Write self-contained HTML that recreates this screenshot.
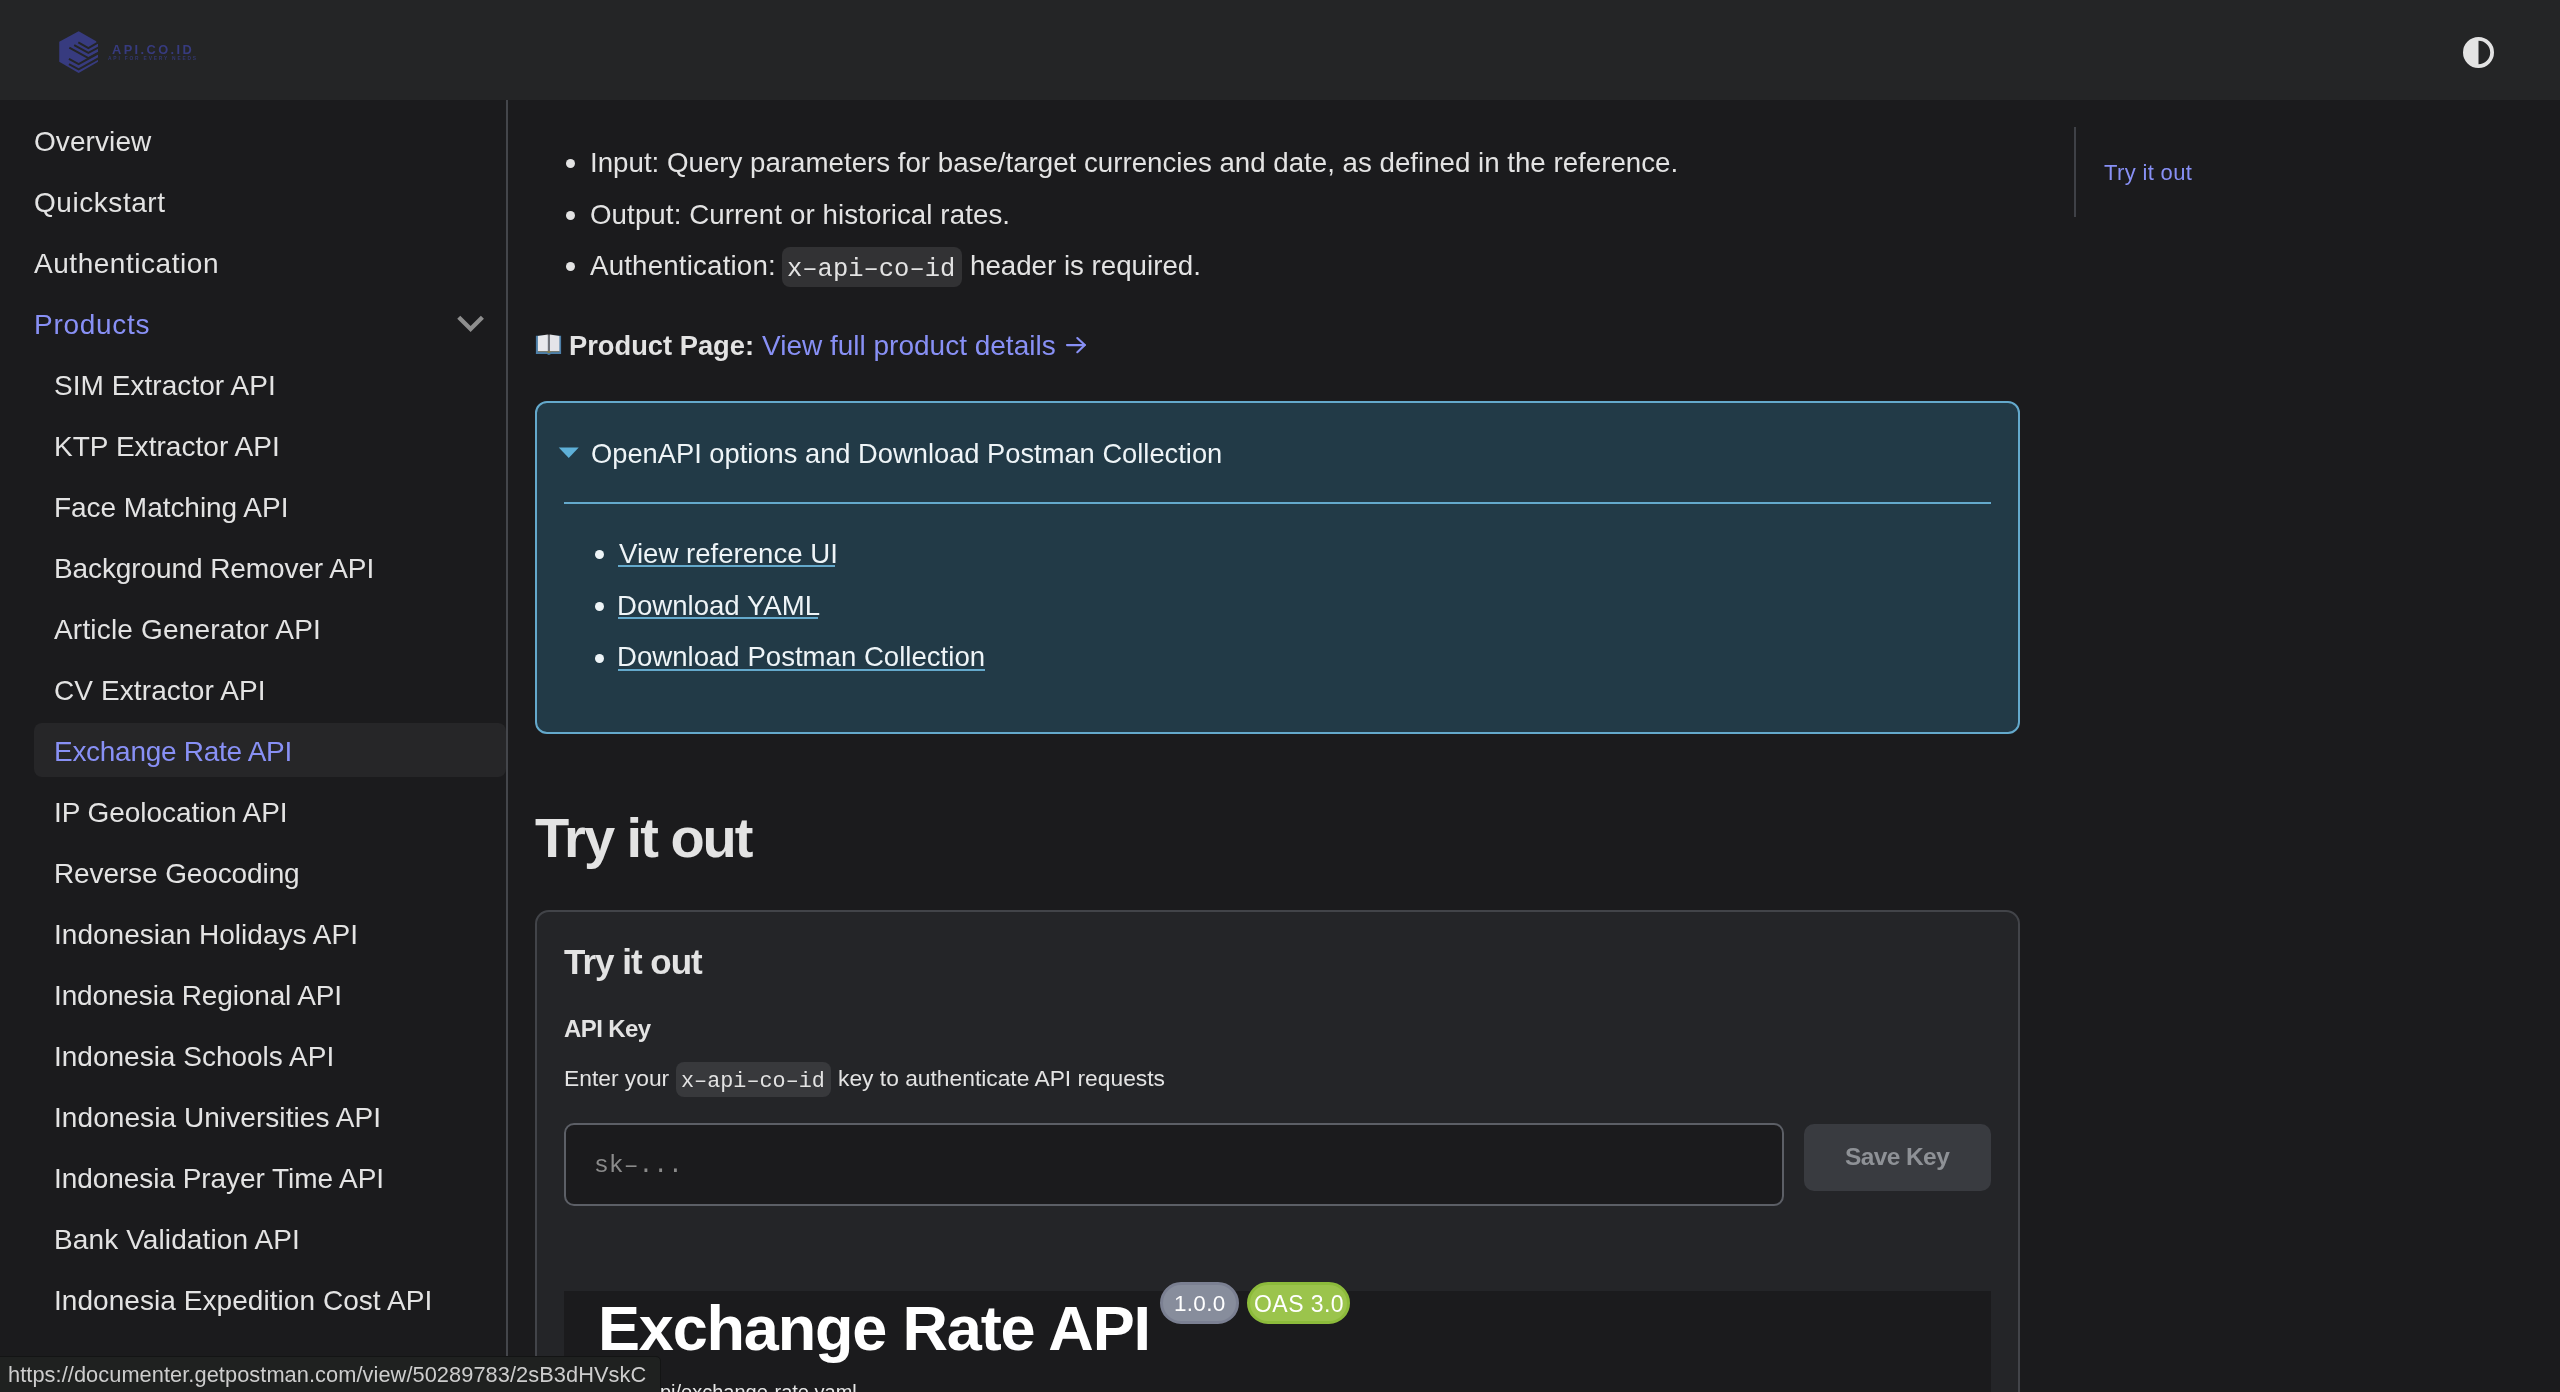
<!DOCTYPE html>
<html><head><meta charset="utf-8">
<style>
html,body{margin:0;padding:0;}
body{width:2560px;height:1392px;overflow:hidden;position:relative;background:#1b1b1d;font-family:"Liberation Sans",sans-serif;color:#e3e3e3;}
.t{position:absolute;white-space:nowrap;line-height:1;will-change:transform;}
.hdr{position:absolute;left:0;top:0;width:2560px;height:100px;background:#242526;}
.sb{position:absolute;left:0;top:100px;width:506px;height:1292px;border-right:2px solid #44464b;}
.si{font-size:28px;color:#e3e3e3;}
.sub{left:54px;}
.top{left:34px;}
.act{position:absolute;left:34px;top:723px;width:472px;height:54px;background:#262628;border-radius:8px;}
.pur{color:#8890f5;}
.mono{font-family:"Liberation Mono",monospace;}

.bul{position:absolute;width:9px;height:9px;border-radius:50%;background:#e3e3e3;}
.mt{font-size:27.7px;color:#e3e3e3;}
.code{position:absolute;background:#323234;border-radius:8px;}
.det{position:absolute;left:535px;top:401px;width:1481px;height:329px;border:2px solid #64a9cc;border-radius:12px;background:#223a47;}
.dl{font-size:27.6px;color:#eef4f7;}
.ul{position:absolute;height:2px;background:#64a9cc;}
.card{position:absolute;left:535px;top:910px;width:1481px;height:600px;border:2px solid #424449;border-radius:14px;background:#242528;}
</style></head>
<body>
<div class="hdr"></div>
<div class="sb"></div>
<div class="act"></div>

<!-- sidebar -->
<div class="t si top" style="top:128px;letter-spacing:0.086px">Overview</div>
<div class="t si top" style="top:189px;letter-spacing:0.556px">Quickstart</div>
<div class="t si top" style="top:250px;letter-spacing:0.538px">Authentication</div>
<div class="t si top pur" style="top:311px;letter-spacing:0.714px">Products</div>
<div class="t si sub" style="top:372px;letter-spacing:0.050px">SIM Extractor API</div>
<div class="t si sub" style="top:433px;letter-spacing:0.037px">KTP Extractor API</div>
<div class="t si sub" style="top:494px;letter-spacing:-0.037px">Face Matching API</div>
<div class="t si sub" style="top:555px;letter-spacing:-0.095px">Background Remover API</div>
<div class="t si sub" style="top:616px;letter-spacing:0.190px">Article Generator API</div>
<div class="t si sub" style="top:677px;letter-spacing:0.100px">CV Extractor API</div>
<div class="t si sub pur" style="top:738px;letter-spacing:-0.287px">Exchange Rate API</div>
<div class="t si sub" style="top:799px;letter-spacing:-0.053px">IP Geolocation API</div>
<div class="t si sub" style="top:860px;letter-spacing:-0.113px">Reverse Geocoding</div>
<div class="t si sub" style="top:921px;letter-spacing:0.018px">Indonesian Holidays API</div>
<div class="t si sub" style="top:982px;letter-spacing:-0.143px">Indonesia Regional API</div>
<div class="t si sub" style="top:1043px;letter-spacing:0.000px">Indonesia Schools API</div>
<div class="t si sub" style="top:1104px;letter-spacing:0.072px">Indonesia Universities API</div>
<div class="t si sub" style="top:1165px;letter-spacing:-0.058px">Indonesia Prayer Time API</div>
<div class="t si sub" style="top:1226px;letter-spacing:0.106px">Bank Validation API</div>
<div class="t si sub" style="top:1287px;letter-spacing:0.054px">Indonesia Expedition Cost API</div>


<!-- header -->
<svg style="position:absolute;left:54px;top:26px" width="50" height="52" viewBox="0 0 1338 1392">
 <defs><mask id="lm" maskUnits="userSpaceOnUse" x="0" y="0" width="1338" height="1392">
  <polygon points="660,140 1130,410 1180,480 1180,960 660,1260 140,960 140,420" fill="#fff"/>
  <g fill="none" stroke="#000" stroke-width="56">
   <polyline points="650,440 920,590 1220,420"/>
   <polyline points="540,510 920,720 1220,560"/>
   <polyline points="410,580 920,860 1220,700"/>
   <polyline points="400,880 660,1020 1220,710"/>
   <polyline points="400,1020 660,1160 1220,850"/>
  </g>
  <polygon points="1130,410 1338,300 1338,1392 1180,1392 1180,480" fill="#000"/>
 </mask></defs>
 <rect x="0" y="0" width="1338" height="1392" fill="#373b7f" mask="url(#lm)"/>
</svg>
<div class="t" style="left:112px;top:44px;font-size:12.8px;font-weight:bold;letter-spacing:2.4px;color:#373b7f">API.CO.ID</div>
<div class="t" style="left:108px;top:57.2px;font-size:4.9px;font-weight:bold;letter-spacing:1.8px;color:#33376f">API FOR EVERY NEEDS</div>
<svg style="position:absolute;left:2460px;top:34px" width="37" height="37" viewBox="0 0 37 37">
 <circle cx="18.5" cy="18.5" r="13.6" fill="none" stroke="#e3e3e3" stroke-width="3.8"/>
 <path d="M18.5 4.9 A13.6 13.6 0 0 0 18.5 32.1 Z" fill="#e3e3e3"/>
</svg>

<!-- sidebar chevron -->
<svg style="position:absolute;left:450px;top:305px" width="40" height="35" viewBox="0 0 40 35">
 <polyline points="8.75,12.2 20.6,24 32.4,12.2" fill="none" stroke="#8e8e8e" stroke-width="4.3"/>
</svg>

<!-- main: bullets -->
<div class="bul" style="left:566px;top:158.75px"></div>
<div class="bul" style="left:566px;top:210.5px"></div>
<div class="bul" style="left:566px;top:262.25px"></div>
<div class="t mt" style="left:589.5px;top:148.8px">Input: Query parameters for base/target currencies and date, as defined in the reference.</div>
<div class="t mt" style="left:589.5px;top:200.5px;letter-spacing:0.086px">Output: Current or historical rates.</div>
<div class="t mt" style="left:589.5px;top:251.8px;letter-spacing:0.18px">Authentication:</div>
<div class="code" style="left:782px;top:247px;width:180px;height:40px"></div>
<div class="t mono" style="left:787px;top:256.5px;font-size:25.5px;color:#e3e3e3">x–api–co–id</div>
<div class="t mt" style="left:970px;top:251.8px">header is required.</div>

<svg style="position:absolute;left:532px;top:328px" width="34" height="32" viewBox="0 0 34 32">
 <polygon points="3.9,7.8 29.1,7.8 29.1,26 19,26 16.9,27 14.8,26 3.9,26" fill="#4d7fa8"/>
 <polygon points="5.9,23.2 5.9,8 15.9,6.4 15.9,23.2" fill="#e8e8ec"/>
 <polygon points="17.9,6.4 27.4,8 27.4,23.2 17.9,23.2" fill="#e4e4e9"/>
 <rect x="15.9" y="6.6" width="2" height="16.6" fill="#727278"/>
 <rect x="5.9" y="23.2" width="21.5" height="0.9" fill="#7a7462"/>
 <rect x="15.4" y="23.4" width="3" height="1.4" fill="#8a8040"/>
</svg>
<div class="t" style="left:568.5px;top:331.6px;font-size:27.3px;font-weight:bold;color:#e3e3e3">Product Page:</div>
<div class="t pur" style="left:762px;top:331.6px;font-size:28px">View full product details</div>
<svg style="position:absolute;left:1064px;top:335px" width="24" height="20" viewBox="0 0 24 20"><g fill="none" stroke="#8890f5" stroke-width="2.1" stroke-linecap="round" stroke-linejoin="round"><line x1="3" y1="10.1" x2="20.8" y2="10.1"/><polyline points="13.3,3 20.8,10.1 13.3,17.2"/></g></svg>

<!-- details -->
<div class="det"></div>
<svg style="position:absolute;left:558px;top:447px" width="22" height="12" viewBox="0 0 22 12"><polygon points="0.75,0.5 20.75,0.5 10.75,11" fill="#5eb0d8"/></svg>
<div class="t" style="left:591px;top:439.6px;font-size:27.3px;color:#eef4f7">OpenAPI options and Download Postman Collection</div>
<div style="position:absolute;left:564px;top:502px;width:1427px;height:2px;background:#64a9cc"></div>
<div class="bul" style="left:595px;top:550px;background:#eef4f7"></div>
<div class="bul" style="left:595px;top:601.75px;background:#eef4f7"></div>
<div class="bul" style="left:595px;top:653.5px;background:#eef4f7"></div>
<div class="t dl" style="left:618.5px;top:539.7px">View reference UI</div>
<div class="ul" style="left:618px;top:565px;width:217px"></div>
<div class="t dl" style="left:617px;top:591.6px">Download YAML</div>
<div class="ul" style="left:618px;top:616.75px;width:200px"></div>
<div class="t dl" style="left:617px;top:643.4px">Download Postman Collection</div>
<div class="ul" style="left:618px;top:668.5px;width:367px"></div>

<!-- try it out -->
<div class="t" style="left:535px;top:809.5px;font-size:56px;font-weight:bold;letter-spacing:-2px;color:#e3e3e3">Try it out</div>
<div class="card"></div>
<div class="t" style="left:564px;top:943.5px;font-size:35px;font-weight:bold;letter-spacing:-1px;color:#e3e3e3">Try it out</div>
<div class="t" style="left:564px;top:1016.6px;font-size:24px;font-weight:bold;letter-spacing:-0.6px;color:#e3e3e3">API Key</div>
<div class="t" style="left:564px;top:1067px;font-size:22.8px;color:#e3e3e3">Enter your</div>
<div class="code" style="left:676px;top:1062px;width:155px;height:35px;background:#38393c"></div>
<div class="t mono" style="left:680.5px;top:1071px;font-size:21.8px;color:#e3e3e3">x–api–co–id</div>
<div class="t" style="left:838px;top:1067.4px;font-size:22.8px;color:#e3e3e3">key to authenticate API requests</div>
<div style="position:absolute;left:564px;top:1123px;width:1216px;height:79px;border:2px solid #5c5f66;border-radius:10px;background:#1b1b1d"></div>
<div class="t mono" style="left:593.5px;top:1153px;font-size:24.7px;color:#8b8b8b">sk–...</div>
<div style="position:absolute;left:1804px;top:1124px;width:187px;height:67px;border-radius:10px;background:#393b40"></div>
<div class="t" style="left:1845px;top:1144.5px;font-size:24.5px;font-weight:bold;letter-spacing:-0.6px;color:#8e9196">Save Key</div>

<!-- redoc -->
<div style="position:absolute;left:564px;top:1291px;width:1427px;height:110px;background:#1b1b1d"></div>
<div class="t" style="left:598px;top:1296.7px;font-size:63px;font-weight:bold;letter-spacing:-1.18px;color:#ffffff">Exchange Rate API</div>
<div style="position:absolute;left:1160px;top:1282px;width:73px;height:36px;border:3px solid #7b8092;border-radius:21px;background:#878d9c"></div>
<div class="t" style="left:1174px;top:1292.6px;font-size:22.5px;letter-spacing:0.3px;color:#ffffff">1.0.0</div>
<div style="position:absolute;left:1247px;top:1282px;width:97px;height:36px;border:3px solid #8cbb3b;border-radius:21px;background:#9bc44c"></div>
<div class="t" style="left:1253.5px;top:1292.6px;font-size:23px;letter-spacing:0.45px;color:#ffffff">OAS 3.0</div>

<!-- toc -->
<div style="position:absolute;left:2074px;top:127px;width:2px;height:90px;background:#3f4147"></div>
<div class="t pur" style="left:2103.5px;top:162.2px;font-size:22px;letter-spacing:0.35px">Try it out</div>

<div class="t" style="left:660px;top:1381.7px;font-size:20px;color:#e8e8e8">pi/exchange-rate.yaml</div>
<!-- status bar -->
<div style="position:absolute;left:-1px;top:1356px;width:660px;height:40px;background:#1f2120;border:1px solid #131414;border-top-right-radius:5px"></div>
<div class="t" style="left:8px;top:1363.5px;font-size:21.8px;letter-spacing:0.058px;color:#cdcdcd">https://documenter.getpostman.com/view/50289783/2sB3dHVskC</div>
</body></html>
